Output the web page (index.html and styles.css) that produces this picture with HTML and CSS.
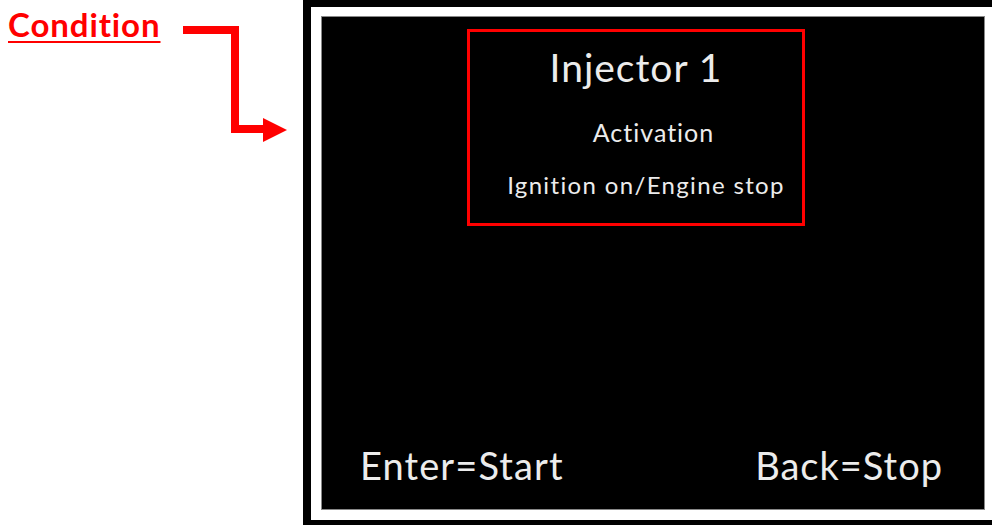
FILE: index.html
```html
<!DOCTYPE html>
<html>
<head>
<meta charset="utf-8">
<link rel="stylesheet" href="styles.css">
</head>
<body>
<div class="page">
  <div class="annot">
    <span class="label">Condition</span>
    <svg class="arrow" width="300" height="160" viewBox="0 0 300 160">
      <polyline points="183,30 235,30 235,129 265,129" fill="none" stroke="#ff0000" stroke-width="8" stroke-linejoin="miter"/>
      <polygon points="263,118 287,130 263,142" fill="#ff0000"/>
    </svg>
  </div>
  <div class="frame">
    <div class="screen">
      <div class="top">
        <div class="cond">
          <div class="title">Injector 1</div>
          <div class="sub">Activation</div>
          <div class="state">Ignition on/Engine stop</div>
        </div>
      </div>
      <div class="keys">
        <span class="key">Enter=Start</span>
        <span class="key key-back">Back=Stop</span>
      </div>
    </div>
  </div>
</div>
</body>
</html>
```
FILE: styles.css
```css
* { box-sizing: border-box; }
html, body { margin: 0; padding: 0; background: #fff; }
body { width: 992px; height: 525px; overflow: hidden; font-family: Lato, "Open Sans", sans-serif; }
.page { display: flex; height: 525px; }
.annot { position: relative; width: 303px; flex: none; padding: 4px 0 0 8px; }
.label {
  color: #ff0000; font-weight: 700; font-size: 33px; line-height: 40px; letter-spacing: 0.9px;
  text-decoration: underline; text-decoration-thickness: 2px; text-underline-offset: 4px;
}
.arrow { position: absolute; left: 0; top: 0; }
.frame {
  flex: none; width: 700px; height: 528px;
  border-style: solid; border-color: #000; border-width: 7px 8px 8px 8px;
  padding: 9px 10px 10px 10px; background: #fff;
}
.screen {
  width: 664px; height: 494px; background: #000; border: 1px solid #888;
  display: flex; flex-direction: column; justify-content: space-between;
  color: #ececec;
}
.top { padding: 12px 0 0 145px; }
.cond {
  width: 338px; height: 197px; border: 3px solid #ff0000;
  display: flex; flex-direction: column; align-items: center;
}
.title { font-size: 39px; line-height: 40px; margin-top: 15px; letter-spacing: 1px; }
.sub { font-size: 25px; line-height: 28px; margin-top: 31px; padding-left: 35px; letter-spacing: 1px; }
.state { font-size: 24px; line-height: 28px; margin-top: 25px; padding-left: 20px; letter-spacing: 1.35px; }
.keys { display: flex; justify-content: space-between; padding: 0 41px 24px 38px; }
.key { font-size: 38px; line-height: 40px; letter-spacing: 1.1px; }
.key-back { letter-spacing: 1px; }
```
